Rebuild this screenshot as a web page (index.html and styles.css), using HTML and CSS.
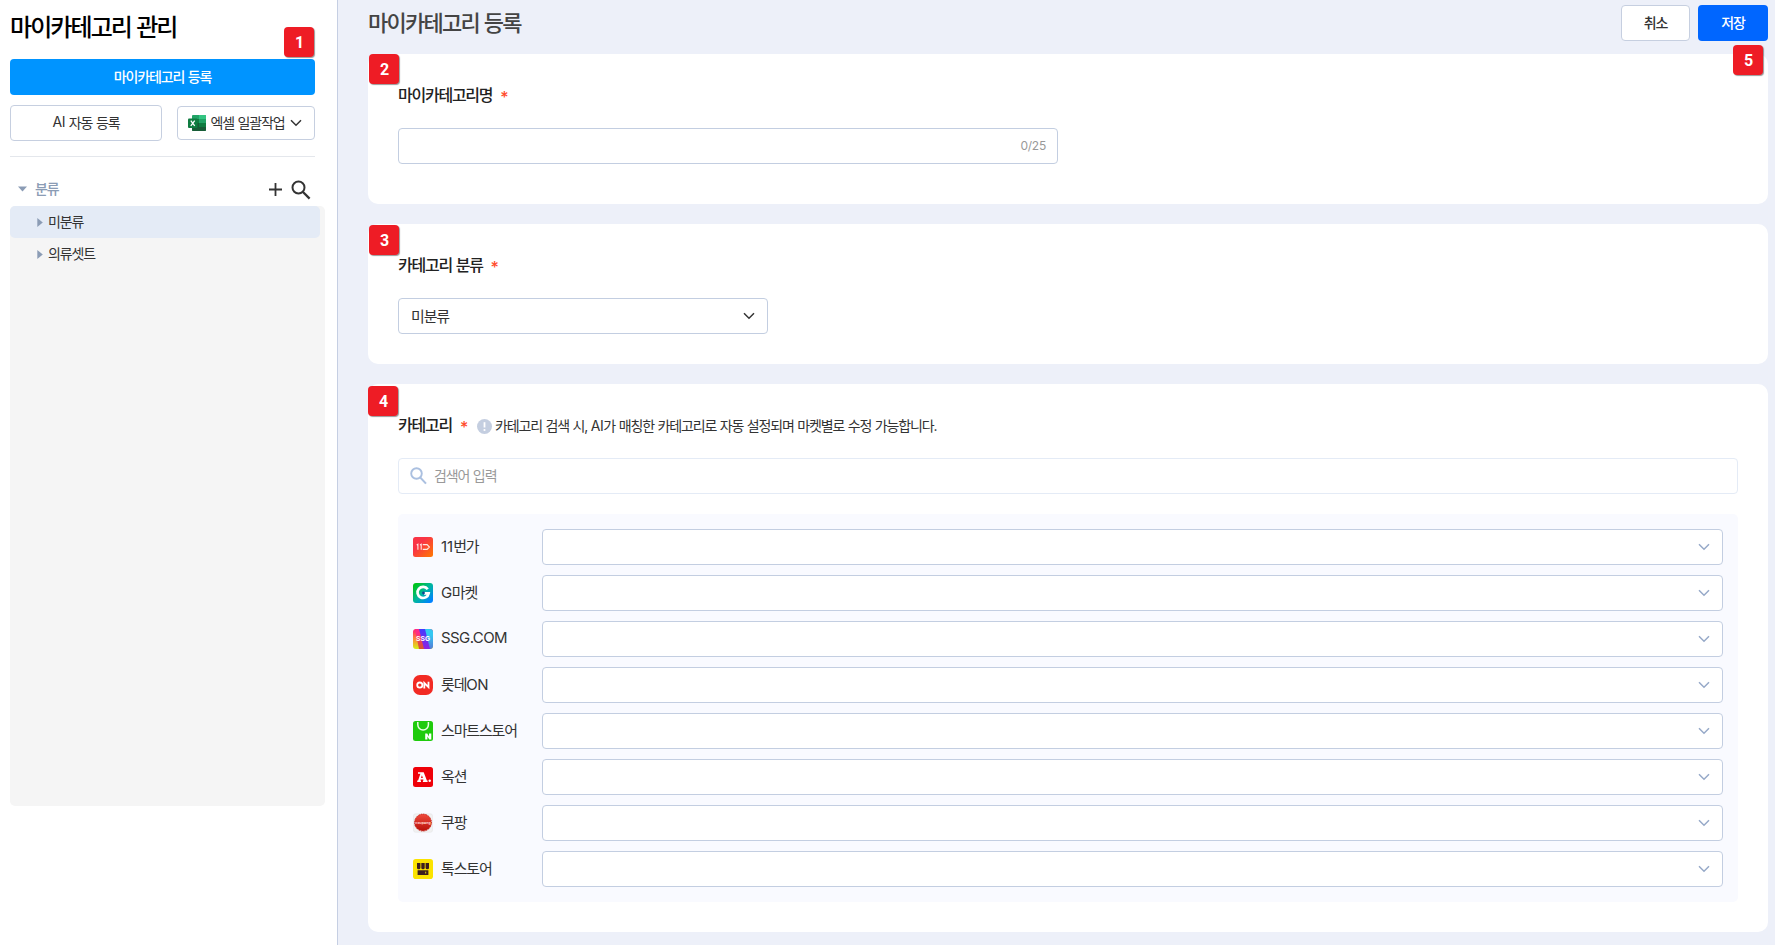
FILE: index.html
```
<!DOCTYPE html>
<html lang="ko">
<head>
<meta charset="utf-8">
<title>마이카테고리 관리</title>
<link rel="stylesheet" href="styles.css">
</head>
<body>
<div class="app">
  <aside class="sidebar">
    <h1 class="side-title">마이카테고리 관리</h1>
    <div class="primary-wrap">
      <button class="btn btn-register">마이카테고리 등록</button>
      <span class="badge badge-1">1</span>
    </div>
    <div class="side-actions">
      <button class="btn btn-ai"><span class="latin">AI</span>&nbsp;자동 등록</button>
      <button class="btn btn-excel">
        <svg width="18" height="16" viewBox="0 0 18 16"><path d="M5 0h12a1 1 0 0 1 1 1v14a1 1 0 0 1-1 1H5a1 1 0 0 1-1-1V1a1 1 0 0 1 1-1z" fill="#21a366"/><path d="M4 8h7v8H5a1 1 0 0 1-1-1z" fill="#185c37"/><path d="M4 4h7v4H4z" fill="#107c41"/><path d="M11 0h6a1 1 0 0 1 1 1v3h-7z" fill="#33c481"/><path d="M11 8h7v4h-7z" fill="#107c41"/><path d="M11 12h7v3a1 1 0 0 1-1 1h-6z" fill="#185c37"/><rect y="3.5" width="9.5" height="9.5" rx="1" fill="#107c41"/><path d="M2.8 5.7l3.9 5.2M6.7 5.7l-3.9 5.2" stroke="#fff" stroke-width="1.3"/></svg>
        <span class="excel-text">엑셀 일괄작업</span>
        <svg width="12" height="8" viewBox="0 0 12 8" class="chev-dark"><path d="M1 1.2l5 5 5-5"/></svg>
      </button>
    </div>
    <div class="tree-head">
      <svg width="9" height="6" viewBox="0 0 9 6"><path d="M0 .5h9L4.5 5.5z" fill="#8b9cb5"/></svg>
      <span class="tree-head-text">분류</span>
      <svg width="13" height="13" viewBox="0 0 13 13"><path d="M6.5 0v13M0 6.5h13" stroke="#333" stroke-width="1.8"/></svg>
      <svg class="tree-search" width="20" height="20" viewBox="0 0 20 20"><circle cx="7.5" cy="7.5" r="6" fill="none" stroke="#333" stroke-width="2"/><path d="M12 12l6.6 6.6" stroke="#333" stroke-width="2.3"/></svg>
    </div>
    <ul class="tree">
      <li class="tree-item selected"><svg width="6" height="9" viewBox="0 0 6 9"><path d="M.3 0L5.8 4.5.3 9z" fill="#8b9cb5"/></svg><span class="tree-text">미분류</span></li>
      <li class="tree-item"><svg width="6" height="9" viewBox="0 0 6 9"><path d="M.3 0L5.8 4.5.3 9z" fill="#8b9cb5"/></svg><span class="tree-text">의류셋트</span></li>
    </ul>
  </aside>

  <main class="main">
    <header class="main-head">
      <h2 class="main-title">마이카테고리 등록</h2>
      <button class="btn btn-cancel">취소</button>
      <button class="btn btn-save">저장</button>
      <span class="badge badge-5">5</span>
    </header>

    <section class="card card-name">
      <span class="badge badge-2">2</span>
      <div class="label">마이카테고리명<span class="req">*</span></div>
      <div class="field name-field"><span class="count">0/25</span></div>
    </section>

    <section class="card card-group">
      <span class="badge badge-3">3</span>
      <div class="label">카테고리 분류<span class="req">*</span></div>
      <div class="field group-field"><span class="field-text">미분류</span><svg width="12" height="8" viewBox="0 0 12 8" class="chev-dark"><path d="M1 1.2l5 5 5-5"/></svg></div>
    </section>

    <section class="card card-category">
      <span class="badge badge-4">4</span>
      <div class="label">카테고리<span class="req">*</span>
        <svg class="info" width="15" height="15" viewBox="0 0 15 15"><circle cx="7.5" cy="7.5" r="7.5" fill="#c4cee0"/><path d="M7.5 3.2v5.3" stroke="#fff" stroke-width="1.8"/><circle cx="7.5" cy="11" r="1.1" fill="#fff"/></svg>
        <span class="desc">카테고리 검색 시, <span class="latin">AI</span>가 매칭한 카테고리로 자동 설정되며 마켓별로 수정 가능합니다.</span>
      </div>
      <div class="field search-field"><svg width="17" height="18" viewBox="0 0 17 18"><circle cx="6.5" cy="6.5" r="5.3" fill="none" stroke="#abc0e0" stroke-width="1.9"/><path d="M10.4 10.6l5.6 6" stroke="#abc0e0" stroke-width="2.1"/></svg><span class="field-text">검색어 입력</span></div>

      <div class="markets">
        <div class="market">
          <svg class="logo" width="20" height="20" viewBox="0 0 20 20"><defs><linearGradient id="g11" x1="0" y1="0" x2="1" y2="1"><stop offset=".35" stop-color="#f93446"/><stop offset="1" stop-color="#ff7a00"/></linearGradient></defs><rect width="20" height="20" rx="2.5" fill="url(#g11)"/><path d="M3.7 8l1.2-.8v5.5M7 8l1.2-.8v5.5M9.8 7.6h4.3l2.3 2.4-2.3 2.4H9.8" fill="none" stroke="#ffe9e4" stroke-width="1.1"/></svg>
          <span class="market-name"><span class="digits">11</span>번가</span>
          <div class="field market-field"><svg width="12" height="8" viewBox="0 0 12 8" class="chev"><path d="M1 1.2l5 5 5-5"/></svg></div>
        </div>
        <div class="market">
          <svg class="logo" width="20" height="20" viewBox="0 0 20 20"><defs><linearGradient id="gg" x1="0" y1="0" x2="1" y2="1"><stop offset=".1" stop-color="#00c41a"/><stop offset=".5" stop-color="#00b5a0"/><stop offset=".9" stop-color="#0082ff"/></linearGradient></defs><rect width="20" height="20" rx="3" fill="url(#gg)"/><path d="M14.7 6.2A5.6 5.6 0 1 0 15.6 10.4H11" fill="none" stroke="#fff" stroke-width="2.7"/><circle cx="10.5" cy="10" r="1.4" fill="#12438f"/></svg>
          <span class="market-name"><span class="latin">G</span>마켓</span>
          <div class="field market-field"><svg width="12" height="8" viewBox="0 0 12 8" class="chev"><path d="M1 1.2l5 5 5-5"/></svg></div>
        </div>
        <div class="market">
          <svg class="logo" width="20" height="20" viewBox="0 0 20 20"><defs><clipPath id="cs"><rect width="20" height="20" rx="3"/></clipPath><linearGradient id="ga" x1="0" y1="0" x2="0" y2="1"><stop offset=".1" stop-color="#ff2d6f"/><stop offset=".5" stop-color="#ff8a34"/><stop offset="1" stop-color="#d4f01c"/></linearGradient><linearGradient id="gb" x1="0" y1="0" x2="0" y2="1"><stop offset=".2" stop-color="#ff2a86"/><stop offset="1" stop-color="#d6562b"/></linearGradient><linearGradient id="gc" x1="0" y1="0" x2="0" y2="1"><stop stop-color="#4439ff"/><stop offset="1" stop-color="#8f22e0"/></linearGradient><linearGradient id="gd" x1="0" y1="0" x2="0" y2="1"><stop offset=".3" stop-color="#34c8f2"/><stop offset="1" stop-color="#547bd8"/></linearGradient></defs><g clip-path="url(#cs)"><rect width="20" height="20" fill="url(#ga)"/><path d="M2 0h5l5 20H6z" fill="url(#gb)"/><path d="M6 0h7l5 20h-7z" fill="url(#gc)"/><path d="M12 0h8v20h-3z" fill="url(#gd)"/></g><text x="10" y="12.4" text-anchor="middle" class="logo-text" font-size="6.8">SSG</text></svg>
          <span class="market-name"><span class="ssg">SSG.COM</span></span>
          <div class="field market-field"><svg width="12" height="8" viewBox="0 0 12 8" class="chev"><path d="M1 1.2l5 5 5-5"/></svg></div>
        </div>
        <div class="market">
          <svg class="logo" width="20" height="20" viewBox="0 0 20 20"><rect width="20" height="20" rx="7" fill="#f22a24"/><circle cx="6.8" cy="10.1" r="2.6" fill="none" stroke="#fff" stroke-width="1.8"/><path d="M11.3 13.4V8l4.2 4.2V6.8" fill="none" stroke="#fff" stroke-width="1.8"/></svg>
          <span class="market-name">롯데<span class="latin">ON</span></span>
          <div class="field market-field"><svg width="12" height="8" viewBox="0 0 12 8" class="chev"><path d="M1 1.2l5 5 5-5"/></svg></div>
        </div>
        <div class="market">
          <svg class="logo" width="20" height="20" viewBox="0 0 20 20"><rect width="20" height="20" rx="2.5" fill="#1fcb0c"/><path d="M4.8 1v2.8a5.3 5.3 0 0 0 10.6 0V1" fill="none" stroke="#e8ffe3" stroke-width="1.5"/><path d="M12.2 18.6v-6h2l1.8 3v-3h2.3v6h-2l-1.9-3v3z" fill="#fff"/></svg>
          <span class="market-name">스마트스토어</span>
          <div class="field market-field"><svg width="12" height="8" viewBox="0 0 12 8" class="chev"><path d="M1 1.2l5 5 5-5"/></svg></div>
        </div>
        <div class="market">
          <svg class="logo" width="20" height="20" viewBox="0 0 20 20"><rect width="20" height="20" rx="2.5" fill="#ef0009"/><path d="M5 5.2h5.7l3.2 8.2h.7v1.6h-4.7v-1.6h.7l-.3-1H7.6l-.3 1H8V15H4.2v-1.6h.9L7.4 6.8H5zM8.9 8.2l-.9 2.8h1.9z" fill="#fff" fill-rule="evenodd"/><circle cx="16.7" cy="13.8" r="1.2" fill="#fff"/></svg>
          <span class="market-name">옥션</span>
          <div class="field market-field"><svg width="12" height="8" viewBox="0 0 12 8" class="chev"><path d="M1 1.2l5 5 5-5"/></svg></div>
        </div>
        <div class="market">
          <svg class="logo" width="20" height="20" viewBox="0 0 20 20"><defs><linearGradient id="gp" x1="0" y1="0" x2="0" y2="1"><stop stop-color="#ef4a3c"/><stop offset="1" stop-color="#b80f08"/></linearGradient></defs><rect x=".5" y=".8" width="19" height="18.4" rx="2" fill="#f1f1f2" stroke="#e6e6e8" stroke-width=".6"/><circle cx="10" cy="9.6" r="8.5" fill="url(#gp)" stroke="#c71d14" stroke-width="1" stroke-dasharray="1 .8"/><text x="10" y="10.8" text-anchor="middle" class="logo-text faint" font-size="3.6">coupang</text></svg>
          <span class="market-name">쿠팡</span>
          <div class="field market-field"><svg width="12" height="8" viewBox="0 0 12 8" class="chev"><path d="M1 1.2l5 5 5-5"/></svg></div>
        </div>
        <div class="market">
          <svg class="logo" width="20" height="20" viewBox="0 0 20 20"><rect width="20" height="20" rx="2.8" fill="#fbe300"/><path d="M4 4h3.4v5a1.7 1.2 0 0 1-3.4 0zM8.3 4h3.4v5a1.7 1.2 0 0 1-3.4 0zM12.6 4H16v5a1.7 1.2 0 0 1-3.4 0zM4.6 11.3h10.8V16H4.6z" fill="#3c1e1e"/><path d="M12.7 12.7v1.8" stroke="#fbe300" stroke-width=".9"/></svg>
          <span class="market-name">톡스토어</span>
          <div class="field market-field"><svg width="12" height="8" viewBox="0 0 12 8" class="chev"><path d="M1 1.2l5 5 5-5"/></svg></div>
        </div>
      </div>
    </section>
  </main>
</div>
</body>
</html>
```

FILE: styles.css
```
* { box-sizing: border-box; }
body {
  margin: 0;
  background: #fff;
  color: #333;
  font-family: Inter, "Noto Sans CJK KR", sans-serif;
  font-size: 14px;
  letter-spacing: -0.08em;
  word-spacing: 0.055em;
  white-space: nowrap;
}
h1, h2, ul { margin: 0; padding: 0; }
ul { list-style: none; }
svg { flex: none; display: block; }
.latin { letter-spacing: -0.03em; }
.digits { letter-spacing: 0; }
.ssg { letter-spacing: -0.038em; }

.app { display: flex; height: 945px; overflow: hidden; }

.sidebar {
  width: 338px;
  flex: none;
  border-right: 1px solid #c6cfe3;
  padding: 0 0 0 10px;
}
.side-title {
  height: 59px;
  padding-top: 10px;
  line-height: 36px;
  font-size: 24px;
  font-weight: 500;
  letter-spacing: -0.08em;
  color: #000;
}
.btn {
  display: flex;
  align-items: center;
  justify-content: center;
  height: 36px;
  padding: 0 0 2px;
  border: 1px solid #c6cfe0;
  border-radius: 4px;
  background: #fff;
  color: #333;
  font: inherit;
  letter-spacing: inherit;
  word-spacing: inherit;
}
.primary-wrap { position: relative; width: 305px; }
.btn-register {
  width: 305px;
  border: 0;
  background: #0094ff;
  color: #fff;
  font-weight: 500;
}
.side-actions {
  display: flex;
  align-items: center;
  justify-content: space-between;
  width: 305px;
  height: 62px;
  padding-bottom: 6px;
  border-bottom: 1px solid #e4e7ec;
}
.btn-ai { width: 152px; }
.btn-excel { width: 138px; height: 34px; padding: 0 2px 0 0; }
.excel-text { margin: 0 5px 0 4px; padding-bottom: 2px; }
.chev-dark path, .chev path { fill: none; stroke: #333; stroke-width: 1.5; }
.chev path { stroke: #96a9c8; }

.tree-head {
  display: flex;
  align-items: center;
  width: 301px;
  height: 49px;
  padding: 15px 0 0 8px;
}
.tree-head-text { flex: 1; margin-left: 8px; padding-bottom: 2px; color: #8b9cb5; font-weight: 500; }
.tree-search { margin: 2px 0 0 9px; }
.tree {
  width: 315px;
  height: 600px;
  border-radius: 5px;
  background: #f5f5f5;
}
.tree-item {
  display: flex;
  align-items: center;
  gap: 5px;
  width: 310px;
  height: 32px;
  padding-left: 27px;
  border-radius: 5px;
}
.tree-text, .field-text { padding-bottom: 2px; }
.selected { background: #e4ebf6; }

.main {
  flex: 1;
  padding: 0 7px 0 30px;
  background: #edf0f9;
}
.main-head {
  position: relative;
  display: flex;
  gap: 8px;
  height: 54px;
  padding-top: 5px;
}
.main-title {
  flex: 1;
  line-height: 36px;
  font-size: 22px;
  font-weight: 500;
  letter-spacing: -0.08em;
  color: #444;
}
.btn-cancel { width: 69px; font-weight: 500; }
.btn-save { width: 70px; border: 0; background: #0066ff; color: #fff; font-weight: 500; }

.card {
  position: relative;
  margin-bottom: 20px;
  padding: 30px;
  border-radius: 10px;
  background: #fff;
}
.card-name { height: 150px; }
.card-group { height: 140px; }
.card-category { height: 548px; }
.label {
  display: flex;
  align-items: center;
  height: 22px;
  margin-bottom: 22px;
  padding-bottom: 2px;
  font-size: 16px;
  font-weight: 500;
  letter-spacing: -1.25px;
  color: #222;
}
.req { margin: 6px 0 0 8px; color: #ff4b2b; font-size: 16px; font-weight: 500; line-height: 16px; }
.info { margin: 4px 0 0 10px; }
.desc {
  margin: 1px 0 0 3px;
  font-size: 14px;
  font-weight: 400;
  letter-spacing: -1.14px;
  color: #333;
}

.field {
  display: flex;
  align-items: center;
  height: 36px;
  border: 1px solid #c3cee1;
  border-radius: 4px;
  background: #fff;
}
.card-name .field { width: 660px; }
.name-field { justify-content: flex-end; padding-right: 11px; }
.count { padding-bottom: 1px; color: #999; font-size: 12px; letter-spacing: -0.02em; }
.group-field {
  justify-content: space-between;
  width: 370px;
  padding: 0 12px;
  font-size: 15px;
}
.search-field { gap: 7px; padding-left: 11px; border-color: #e4ebf6; color: #999; }

.markets {
  display: flex;
  flex-direction: column;
  gap: 10px;
  height: 388px;
  margin-top: 20px;
  padding: 15px;
  border-radius: 5px;
  background: #f9faff;
  letter-spacing: -1.15px;
}
.market { display: flex; align-items: center; height: 36px; }
.logo { margin-right: 8px; }
.logo-text { font-family: Inter, sans-serif; font-weight: 700; fill: #fff; letter-spacing: 0; }
.faint { fill: #ffd0cb; }
.market-name { width: 101px; padding-bottom: 3px; font-size: 15px; }
.market-field { flex: 1; justify-content: flex-end; padding-right: 12px; }

.badge {
  position: absolute;
  z-index: 1;
  width: 30px;
  height: 30px;
  padding-left: 1px;
  border-radius: 4px;
  background: #ee1c25;
  box-shadow: 1px 1px 1px rgba(0, 0, 0, 0.4);
  color: #fff;
  font: 700 16px/31px Roboto, sans-serif;
  letter-spacing: 0;
  text-align: center;
}
.badge-1 { left: 274px; top: -32px; }
.badge-2 { left: 1px; top: 0; }
.badge-3 { left: 1px; top: 1px; }
.badge-4 { left: 0; top: 2px; }
.badge-5 { right: 5px; top: 45px; }
```
